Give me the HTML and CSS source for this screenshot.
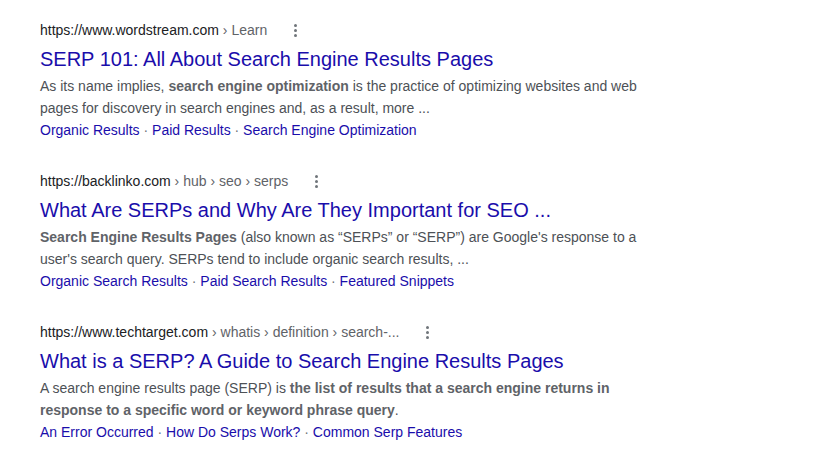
FILE: index.html
```html
<!DOCTYPE html>
<html lang="en">
<head>
<meta charset="utf-8">
<title>SERP results</title>
<link rel="stylesheet" href="styles.css">
</head>
<body>
<div class="results">
  <div class="result">
    <div class="cite-row">
      <cite class="cite">https://www.wordstream.com<span class="crumbs"> › Learn</span></cite>
      <span class="more"><i></i><i></i><i></i></span>
    </div>
    <a class="title" href="#">SERP 101: All About Search Engine Results Pages</a>
    <div class="snippet">As its name implies, <b>search engine optimization</b> is the practice of optimizing websites and web pages for discovery in search engines and, as a result, more ...</div>
    <div class="sitelinks"><a href="#">Organic Results</a><span class="sep"> · </span><a href="#">Paid Results</a><span class="sep"> · </span><a href="#">Search Engine Optimization</a></div>
  </div>
  <div class="result">
    <div class="cite-row">
      <cite class="cite">https://backlinko.com<span class="crumbs"> › hub › seo › serps</span></cite>
      <span class="more"><i></i><i></i><i></i></span>
    </div>
    <a class="title" href="#">What Are SERPs and Why Are They Important for SEO ...</a>
    <div class="snippet"><b>Search Engine Results Pages</b> (also known as “SERPs” or “SERP”) are Google's response to a user's search query. SERPs tend to include organic search results, ...</div>
    <div class="sitelinks"><a href="#">Organic Search Results</a><span class="sep"> · </span><a href="#">Paid Search Results</a><span class="sep"> · </span><a href="#">Featured Snippets</a></div>
  </div>
  <div class="result">
    <div class="cite-row">
      <cite class="cite">https://www.techtarget.com<span class="crumbs"> › whatis › definition › search-...</span></cite>
      <span class="more"><i></i><i></i><i></i></span>
    </div>
    <a class="title" href="#">What is a SERP? A Guide to Search Engine Results Pages</a>
    <div class="snippet">A search engine results page (SERP) is <b>the list of results that a search engine returns in response to a specific word or keyword phrase query</b>.</div>
    <div class="sitelinks"><a href="#">An Error Occurred</a><span class="sep"> · </span><a href="#">How Do Serps Work?</a><span class="sep"> · </span><a href="#">Common Serp Features</a></div>
  </div>
</div>
</body>
</html>
```
FILE: styles.css
```css
html, body {
  margin: 0;
  padding: 0;
  background: #ffffff;
}
body {
  font-family: "Liberation Sans", Arial, sans-serif;
  color: #4d5156;
}
.results {
  display: flex;
  flex-direction: column;
  gap: 30px;
  padding: 20px 0 0 40px;
  width: 600px;
}
.result {
  display: flex;
  flex-direction: column;
}
.cite-row {
  display: flex;
  align-items: center;
  height: 20px;
}
.cite {
  font-style: normal;
  font-size: 14px;
  line-height: 20px;
  color: #202124;
  white-space: nowrap;
}
.crumbs {
  color: #5f6368;
}
.more {
  display: flex;
  flex-direction: column;
  align-items: center;
  gap: 2px;
  margin-left: 25px;
  width: 6px;
}
.more i {
  display: block;
  width: 3px;
  height: 3px;
  border-radius: 50%;
  background: #70757a;
}
.title {
  margin-top: 6px;
  font-size: 20px;
  line-height: 26px;
  color: #1a0dab;
  text-decoration: none;
  white-space: nowrap;
}
.snippet {
  margin-top: 3px;
  font-size: 14px;
  line-height: 22px;
  color: #4d5156;
}
.snippet b {
  color: #5f6368;
}
.sitelinks {
  font-size: 14px;
  line-height: 22px;
}
.sitelinks a {
  color: #1a0dab;
  text-decoration: none;
}
.sep {
  color: #70757a;
}
```
